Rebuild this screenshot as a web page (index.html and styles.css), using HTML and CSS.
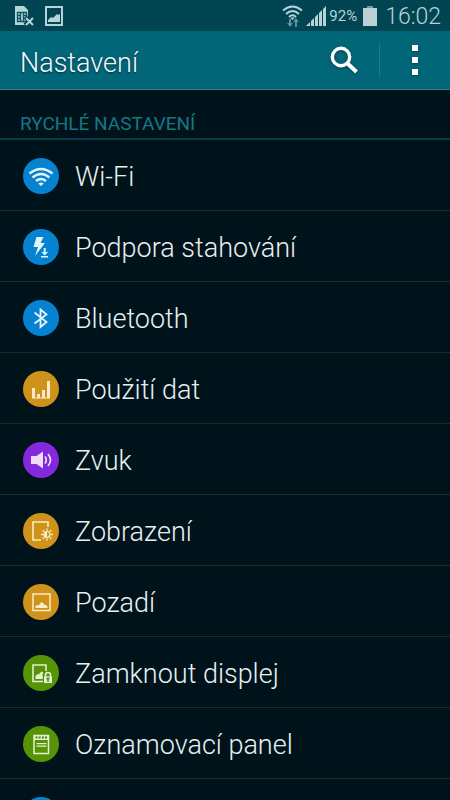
FILE: index.html
```html
<!DOCTYPE html>
<html lang="cs">
<head>
<meta charset="utf-8">
<meta name="viewport" content="width=device-width, initial-scale=1">
<title>Nastavení</title>
<link rel="stylesheet" href="styles.css">
</head>
<body>
<div class="status">
  <svg class="status-icon" width="20" height="22" viewBox="0 0 20 22">
    <path fill="#b5d3d8" d="M1 1h9l4 4v8l-1 1v6H1z"/>
    <path fill="none" stroke="#0b535f" stroke-width="1.300" d="M3.500 7.500h9v9h-9zM6.500 7.500v9M9.500 7.500v9M3.500 10.500h3M3.500 13.500h3M9.500 10.500h3"/>
    <path fill="none" stroke="#044853" stroke-width="4" d="M11 12l8 8M19 12l-8 8"/>
    <path fill="none" stroke="#b5d3d8" stroke-width="2" d="M12 13l7 7M19 13l-7 7"/>
  </svg>
  <svg class="status-icon picture" width="20" height="22" viewBox="0 0 20 22">
    <path fill="none" stroke="#b5d3d8" stroke-width="2" d="M2 2h16v18H2z"/>
    <path fill="#b5d3d8" d="M4 17v-2l3-3 2 1 4-4 1 1 2-1v8z"/>
  </svg>
  <span class="spacer"></span>
  <svg class="status-icon" width="21" height="22" viewBox="0 0 21 22">
    <g fill="none" stroke="#b5d3d8" stroke-width="2">
      <path d="M1 5.500Q10.500-2.500 20 5.500M4 9Q10.500 3 17 9M7 12Q10.500 8.500 14 12"/>
    </g>
    <path fill="#b5d3d8" d="M8.500 13q2-1.500 4 0l-2 2z"/>
    <path fill="#5b929b" d="M7 14h2v4h2l-3 4-3-4h2zM13 22v-5h-2l3-4 3 4h-2v5z"/>
  </svg>
  <svg class="status-icon signal" width="21" height="22" viewBox="0 0 21 22">
    <path fill="#b5d3d8" d="M0 21l4-4v4zM5 21v-5l3-3v8zM9 21v-9l3-3v12zM13 21V8l3-3v16zM17 21V4l3-3v20z"/>
  </svg>
  <span class="percent">92%</span>
  <svg class="status-icon battery" width="14" height="22" viewBox="0 0 14 22">
    <path fill="#6b9da5" d="M4 1h6v3H4z"/><path fill="#bad2d6" d="M0 3h14v18H0z"/>
  </svg>
  <time class="clock">16:02</time>
</div>

<header class="bar">
  <h1>Nastavení</h1>
  <button type="button" class="search" aria-label="Hledat">
    <svg width="30" height="30" viewBox="0 0 30 30">
      <circle cx="12" cy="12" r="8.700" fill="none" stroke="#fff" stroke-width="3.400"/>
      <path d="M18 18l9.500 9" stroke="#fff" stroke-width="4"/>
    </svg>
  </button>
  <button type="button" class="more" aria-label="Další možnosti">
    <svg width="6" height="30" viewBox="0 0 6 30"><path fill="#fff" d="M0 0h6v6H0zM0 12h6v6H0zM0 24h6v6H0z"/></svg>
  </button>
</header>

<main>
  <h2>RYCHLÉ NASTAVENÍ</h2>
  <nav>
    <a class="row" href="#wifi">
      <svg class="icon blue" viewBox="0 0 36 36">
        <path fill="none" stroke="#e3f4fd" stroke-width="2.300" d="M6.500 15.500Q18 6.500 29.500 15.500M9.500 19.500Q18 12.500 26.500 19.500M13 23Q18 19 23 23"/>
        <path fill="#e3f4fd" d="M15.300 25.500q2.700-2 5.400 0L18 28z"/>
      </svg>
      <span>Wi-Fi</span>
    </a>
    <a class="row" href="#stahovani">
      <svg class="icon blue" viewBox="0 0 36 36">
        <path fill="#e3f4fd" d="M13.500 8h7l-3 6h4.500L12 27l3-9h-4.500z"/>
        <path fill="#e3f4fd" d="M20.700 19h2v4h2.300l-3.300 3.500-3.300-3.500h2.300zM18 27h7v1.500h-7z"/>
      </svg>
      <span>Podpora stahování</span>
    </a>
    <a class="row" href="#bluetooth">
      <svg class="icon blue" viewBox="0 0 36 36">
        <path fill="none" stroke="#e3f4fd" stroke-width="1.800" d="M11.500 12.500L23.500 22l-6 5V9.500l6 5-12 9"/>
      </svg>
      <span>Bluetooth</span>
    </a>
    <a class="row" href="#data">
      <svg class="icon orange" viewBox="0 0 36 36">
        <path fill="#fcecc6" d="M9 17h3v10.500H9zM14 23h3v4.500h-3zM19 19h3v8.500h-3zM24 10h3v17.500h-3zM9 26.500h18v1H9z"/>
      </svg>
      <span>Použití dat</span>
    </a>
    <a class="row" href="#zvuk">
      <svg class="icon purple" viewBox="0 0 36 36">
        <path fill="#eddcfc" d="M8 14h5.500L20 9.500v17L13.500 22H8z"/>
        <path fill="none" stroke="#eddcfc" stroke-width="1.700" d="M22 14.500q2.500 3.500 0 7M25 12q5 6 0 12"/>
      </svg>
      <span>Zvuk</span>
    </a>
    <a class="row" href="#zobrazeni">
      <svg class="icon orange" viewBox="0 0 36 36">
        <path fill="none" stroke="#fcecc6" stroke-width="1.600" d="M25 14V9H10v18h8"/>
        <circle cx="24" cy="21.500" r="3" fill="none" stroke="#fcecc6" stroke-width="1.200"/>
        <path fill="#fcecc6" d="M24 18.500a3 3 0 0 0 0 6z"/>
        <path stroke="#fcecc6" stroke-width="1.400" d="M24 15.500v2M24 25.500v2M18 21.500h2M28 21.500h2M19.800 17.300l1.300 1.300M27 24.400l1.300 1.300M28.200 17.300l-1.300 1.300M21 24.400l-1.300 1.300"/>
      </svg>
      <span>Zobrazení</span>
    </a>
    <a class="row" href="#pozadi">
      <svg class="icon orange" viewBox="0 0 36 36">
        <path fill="none" stroke="#fcecc6" stroke-width="1.500" d="M10 10h17v16.500H10z"/>
        <path fill="#fcecc6" d="M12.500 24v-2l2-1 1 .5 3-3.500 2 1.500 1 1.500 1-.5 2 2V24z"/>
      </svg>
      <span>Pozadí</span>
    </a>
    <a class="row" href="#zamek">
      <svg class="icon green" viewBox="0 0 36 36">
        <path fill="none" stroke="#e2f1ce" stroke-width="1.600" d="M23 16v-6H10v16.500h10"/>
        <path fill="#e2f1ce" d="M12.500 24v-3l2-2 1 .5 3-3 2 1-1 2 .5 4.500z"/>
        <path fill="none" stroke="#e2f1ce" stroke-width="1.600" d="M22.500 22v-2a2.500 2.500 0 0 1 5 0v2"/>
        <path fill="#e2f1ce" d="M21 21.500h8V28h-8z"/>
        <path stroke="#4c7a0c" stroke-width="1.300" d="M23.500 23.500h3M25 23.500V27"/>
      </svg>
      <span>Zamknout displej</span>
    </a>
    <a class="row" href="#panel">
      <svg class="icon green" viewBox="0 0 36 36">
        <path fill="none" stroke="#e2f1ce" stroke-width="1.500" d="M11 9.500h14.500v18H11z"/>
        <path fill="#e2f1ce" d="M11 9h14.500v5H11zM13.500 17h10v1.300h-10zM13.500 19.500h10v1.300h-10z"/>
        <path fill="#4c820c" d="M12.500 10.500h2v2h-2zM15.600 10.500h2v2h-2zM18.900 10.500h2v2h-2zM22 10.500h2v2h-2z"/>
      </svg>
      <span>Oznamovací panel</span>
    </a>
    <div class="row">
      <svg class="icon blue" viewBox="0 0 36 36"></svg>
    </div>
  </nav>
</main>
</body>
</html>
```
FILE: styles.css
```css
* {
  box-sizing: border-box;
}

body {
  display: flex;
  flex-direction: column;
  height: 100vh;
  margin: 0;
  overflow: hidden;
  background: #00131a;
  color: #e6f0f3;
  font-family: Roboto, "Liberation Sans", sans-serif;
  font-weight: 300;
}

.status {
  display: flex;
  flex: none;
  align-items: center;
  height: 31px;
  padding: 1px 9px 0 14px;
  background: #004551;
  color: #b5d3d8;
}

.status-icon {
  flex: none;
}

.picture {
  margin-left: 10px;
}

.spacer {
  flex: 1;
}

.signal {
  margin-left: 3px;
}

.percent {
  margin-left: 2px;
  font-size: 15px;
  font-weight: 400;
}

.battery {
  margin-left: 6px;
}

.clock {
  margin-left: 8px;
  font-size: 23px;
}

.bar {
  display: flex;
  flex: none;
  align-items: center;
  height: 59px;
  padding-left: 20px;
  background: #006678;
  border-bottom: 1px solid #2e828c;
}

h1 {
  flex: 1;
  margin: 0;
  padding-top: 5px;
  color: #f4fafb;
  font-size: 27px;
  font-weight: 300;
  line-height: 32px;
  text-shadow: 0 1px 2px #00303a;
}

.bar button {
  display: flex;
  align-items: center;
  justify-content: center;
  height: 32px;
  padding: 0;
  border: 0;
  background: none;
}

.bar svg {
  filter: drop-shadow(0 1px 1px #00404c);
}

.bar .search {
  width: 70px;
}

.bar .more {
  width: 71px;
  border-left: 1px solid #1f7b8a;
}

main {
  flex: 1;
  overflow: hidden;
}

h2 {
  height: 50px;
  margin: 0;
  padding: 22px 20px 0;
  border-bottom: 2px solid #083d47;
  color: #157788;
  font-size: 19px;
  font-weight: 400;
  line-height: 24px;
}

.row {
  display: flex;
  align-items: center;
  gap: 16px;
  height: 71px;
  padding: 2px 23px 0;
  border-bottom: 1px solid #192b31;
  color: inherit;
  font-size: 27px;
  line-height: 32px;
  text-decoration: none;
}

.row span {
  padding-top: 2px;
}

.icon {
  flex: none;
  width: 36px;
  height: 36px;
  border-radius: 50%;
}

.blue {
  background: #0683d0;
}

.orange {
  background: #cf931b;
}

.purple {
  background: #8328dd;
}

.green {
  background: #579306;
}
```
